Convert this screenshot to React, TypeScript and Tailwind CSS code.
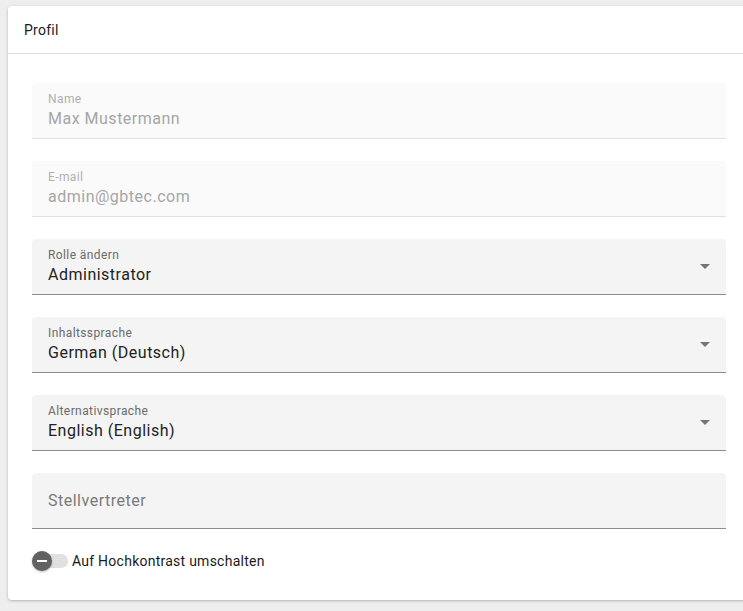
import React from 'react';

interface FieldProps {
  label?: string;
  value?: string;
  placeholder?: string;
  disabled?: boolean;
  select?: boolean;
}

// Material-like filled form field
const Field: React.FC<FieldProps> = ({ label, value, placeholder, disabled, select }) => {
  return (
    <div className="pb-[22px]">
      <div
        className={`relative h-[56px] rounded-t-[4px] px-4 ${
          disabled ? 'bg-[#fafafa] border-b border-[#e0e0e0]' : 'bg-[#f4f4f4] border-b border-[#8c8c8c]'
        }`}
      >
        {label ? (
          <div className="flex flex-col pt-[9px]">
            <span
              className={`text-[12px] leading-[14px] tracking-[0.4px] ${
                disabled ? 'text-[#b0b0b0]' : 'text-[#6b6b6b]'
              }`}
            >
              {label}
            </span>
            <span
              className={`mt-[3px] text-[16px] leading-[20px] tracking-[0.5px] ${
                disabled ? 'text-[#a6a6a6]' : 'text-[#222]'
              }`}
            >
              {value}
            </span>
          </div>
        ) : (
          <div className="flex h-full items-center text-[16px] tracking-[0.5px] text-[#7a7a7a]">{placeholder}</div>
        )}
        {select && (
          <div className="absolute right-[16px] top-[25px] h-0 w-0 border-x-[5px] border-t-[5px] border-x-transparent border-t-[#757575]" />
        )}
      </div>
    </div>
  );
};

export default function App() {
  return (
    <div className="h-[611px] w-[743px] overflow-hidden bg-[#eeeeee] pt-[6px] pl-[8px] font-['Roboto',sans-serif]">
      <div className="w-[742px] rounded-[4px] bg-white shadow-[0_1px_3px_rgba(0,0,0,0.25)]">
        {/* Header */}
        <div className="flex h-[48px] items-center border-b border-[#e0e0e0] px-4 pt-[1px] text-[14px] tracking-[0.25px] text-[#1a1a1a]">
          Profil
        </div>

        {/* Content */}
        <div className="px-6 pt-[29px] pb-[29px]">
          <Field label="Name" value="Max Mustermann" disabled />
          <Field label="E-mail" value="admin@gbtec.com" disabled />
          <Field label="Rolle ändern" value="Administrator" select />
          <Field label="Inhaltssprache" value="German (Deutsch)" select />
          <Field label="Alternativsprache" value="English (English)" select />
          <Field placeholder="Stellvertreter" />

          {/* High contrast toggle */}
          <div className="flex h-[20px] items-center gap-[4px]">
            <div className="relative h-[20px] w-[36px]">
              <div className="absolute left-0 top-[3px] h-[14px] w-[36px] rounded-full bg-[#e0e0e0]" />
              <div className="absolute left-0 top-0 flex h-[20px] w-[20px] items-center justify-center rounded-full bg-[#616161] shadow-[0_1px_2px_rgba(0,0,0,0.3)]">
                <div className="h-[2px] w-[10px] bg-white" />
              </div>
            </div>
            <span className="text-[14px] tracking-[0.25px] text-[#1a1a1a]">Auf Hochkontrast umschalten</span>
          </div>
        </div>
      </div>
    </div>
  );
}
